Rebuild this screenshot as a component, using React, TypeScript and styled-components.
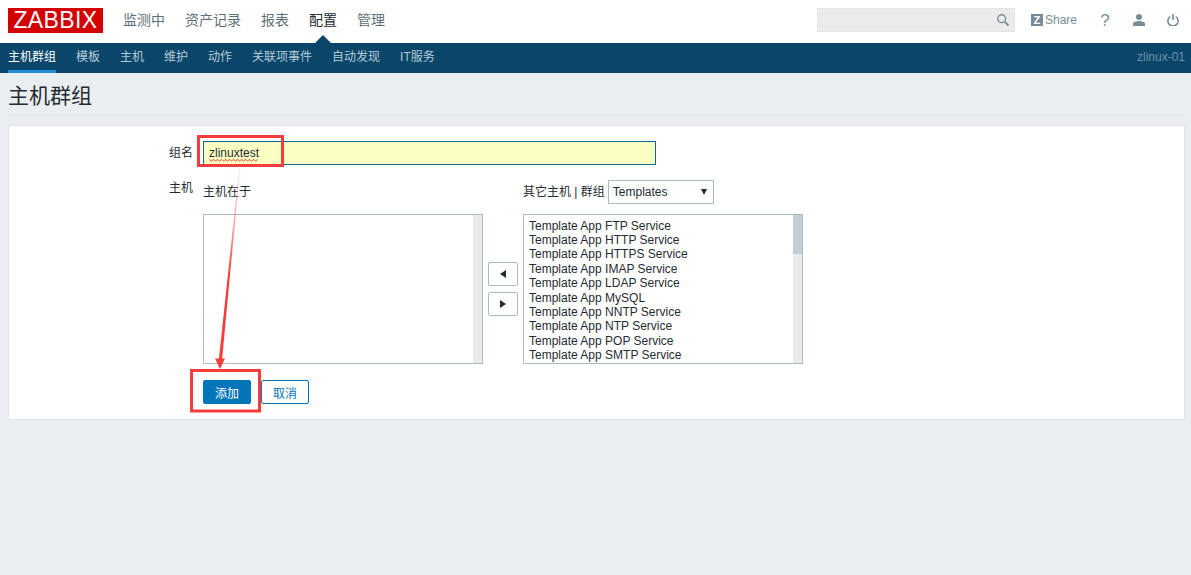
import styled, { createGlobalStyle } from 'styled-components';

const MAIN_MENU = ['监测中', '资产记录', '报表', '配置', '管理'];
const SUB_MENU = ['主机群组', '模板', '主机', '维护', '动作', '关联项事件', '自动发现', 'IT服务'];
const TEMPLATES = ['FTP', 'HTTP', 'HTTPS', 'IMAP', 'LDAP', 'MySQL', 'NNTP', 'NTP', 'POP', 'SMTP'];

const GlobalStyle = createGlobalStyle`
  html, body {
    margin: 0;
    padding: 0;
    background: #ebeef0;
    font-family: "Liberation Sans", "Noto Sans CJK SC", sans-serif;
    font-size: 12px;
    color: #1f2c33;
  }
`;

const App = () => {
  return (
    <Page>
      <GlobalStyle />
      <Header>
        <Logo>ZABBIX</Logo>
        <MainNav>
          {MAIN_MENU.map((item) => (
            <MainItem key={item} $active={item === '配置'}>
              {item}
            </MainItem>
          ))}
        </MainNav>
        <HeaderTools>
          <SearchBox>
            <svg width="12" height="12" viewBox="0 0 12 12" fill="none" stroke="#768d99" strokeWidth="1.4">
              <circle cx="4.7" cy="4.7" r="3.9" />
              <path d="M7.6 7.6 11.5 11.5" strokeWidth="1.9" />
            </svg>
          </SearchBox>
          <ShareLink>
            <ShareBadge>Z</ShareBadge>
            Share
          </ShareLink>
          <HelpIcon>?</HelpIcon>
          <ToolIcon>
            <svg width="12" height="12" viewBox="0 0 12 12" fill="#768d99">
              <circle cx="6" cy="3" r="3" />
              <path d="M0 12v-2.2C0 8 3 7 6 7s6 1 6 2.8V12z" />
            </svg>
          </ToolIcon>
          <ToolIcon>
            <svg width="12" height="12" viewBox="0 0 12 12" fill="none" stroke="#768d99" strokeWidth="1.6">
              <path d="M3.2 2.6a5.1 5.1 0 1 0 5.6 0" />
              <path d="M6 0v6" />
            </svg>
          </ToolIcon>
        </HeaderTools>
      </Header>
      <SubNav>
        {SUB_MENU.map((item, index) => (
          <SubItem key={item} $active={index === 0}>
            {item}
          </SubItem>
        ))}
        <ServerName>zlinux-01</ServerName>
      </SubNav>
      <Main>
        <TitleBar>主机群组</TitleBar>
        <Card>
          <FormRow>
            <FieldLabel>组名</FieldLabel>
            <NameInput readOnly value="zlinuxtest" spellCheck={false} />
          </FormRow>
          <FormRow>
            <HostLabel>主机</HostLabel>
            <Transfer>
              <ListCaption>主机在于</ListCaption>
              <span />
              <OtherCaption>
                其它主机 | 群组
                <SelectBox>
                  Templates
                  <svg width="6" height="6" viewBox="0 0 6 6" fill="#1f2c33">
                    <path d="M0 0h6L3 6z" />
                  </svg>
                </SelectBox>
              </OtherCaption>
              <HostList>
                <ScrollTrack />
              </HostList>
              <MoveButtons>
                <MoveButton>
                  <svg width="6" height="8" viewBox="0 0 6 8" fill="#1f2c33">
                    <path d="M6 0v8L0 4z" />
                  </svg>
                </MoveButton>
                <MoveButton>
                  <svg width="6" height="8" viewBox="0 0 6 8" fill="#1f2c33">
                    <path d="M0 0v8l6-4z" />
                  </svg>
                </MoveButton>
              </MoveButtons>
              <HostList>
                {TEMPLATES.map((name) => (
                  <HostOption key={name}>
                    Template App {name}
                    {name === 'MySQL' ? '' : ' Service'}
                  </HostOption>
                ))}
                <ScrollTrack>
                  <ScrollThumb />
                </ScrollTrack>
              </HostList>
            </Transfer>
          </FormRow>
          <FormRow>
            <span />
            <Actions>
              <PrimaryButton>添加</PrimaryButton>
              <OutlineButton>取消</OutlineButton>
            </Actions>
          </FormRow>
        </Card>
      </Main>
      <Annotations viewBox="0 0 1191 575" fill="none">
        <defs>
          <linearGradient id="arrowFade" x1="0" y1="165" x2="0" y2="368" gradientUnits="userSpaceOnUse">
            <stop offset="0" stopColor="#f43d3d" stopOpacity="0.1" />
            <stop offset="0.3" stopColor="#f43d3d" stopOpacity="0.5" />
            <stop offset="0.55" stopColor="#f43d3d" />
          </linearGradient>
        </defs>
        <path
          d="M209.5 159.5l2 1.5 2-1.5 2 1.5 2-1.5 2 1.5 2-1.5 2 1.5 2-1.5 2 1.5 2-1.5 2 1.5 2-1.5 2 1.5 2-1.5 2 1.5 2-1.5 2 1.5 2-1.5 2 1.5 2-1.5 2 1.5 2-1.5 2 1.5 2-1.5"
          stroke="#e8383d"
        />
        <rect x="198.5" y="136.5" width="84" height="29" stroke="#f43d3d" strokeWidth="3" />
        <rect x="191.5" y="370.5" width="68" height="40.5" stroke="#f43d3d" strokeWidth="3" />
        <path d="M239.6 165h.8L222 360h-3.2z" fill="url(#arrowFade)" />
        <path d="M215 358.5h10L220 369z" fill="#f43d3d" />
      </Annotations>
    </Page>
  );
};

const Page = styled.div`
  position: relative;
  min-height: 575px;
  overflow: hidden;
`;

const Header = styled.header`
  display: flex;
  align-items: flex-start;
  box-sizing: border-box;
  height: 43px;
  padding: 8px 12px 0 8px;
  background: #fff;
`;

const Logo = styled.div`
  width: 95px;
  height: 25px;
  background: #d40000;
  color: #fff;
  font-size: 23px;
  line-height: 25px;
  letter-spacing: 0.4px;
  text-align: center;
`;

const MainNav = styled.nav`
  display: flex;
  gap: 20px;
  margin-left: 20px;
`;

const MainItem = styled.a<{ $active?: boolean }>`
  position: relative;
  height: 35px;
  font-size: 14px;
  line-height: 24px;
  color: ${({ $active }) => ($active ? '#1f2c33' : '#5d6f79')};
  ${({ $active }) =>
    $active &&
    `
    &::after {
      content: '';
      position: absolute;
      left: 50%;
      bottom: 0;
      margin-left: -8px;
      border: 8px solid transparent;
      border-top: 0;
      border-bottom-color: #0a466a;
    }
  `}
`;

const HeaderTools = styled.div`
  display: flex;
  align-items: center;
  gap: 22px;
  height: 24px;
  margin-left: auto;
`;

const SearchBox = styled.div`
  display: flex;
  align-items: center;
  justify-content: flex-end;
  box-sizing: border-box;
  width: 198px;
  height: 24px;
  margin-right: -6px;
  padding-right: 5px;
  background: #ebebeb;
  border: 1px solid #e4e4e4;
`;

const ShareLink = styled.a`
  display: flex;
  align-items: center;
  gap: 2px;
  color: #768d99;
  font-size: 12px;
`;

const ShareBadge = styled.span`
  width: 12px;
  height: 12px;
  background: #768d99;
  color: #fff;
  font-size: 11px;
  font-weight: bold;
  line-height: 12px;
  text-align: center;
`;

const HelpIcon = styled.span`
  width: 12px;
  padding-top: 2px;
  color: #768d99;
  font-size: 17px;
  text-align: center;
`;

const ToolIcon = styled.span`
  display: flex;
`;

const SubNav = styled.nav`
  display: flex;
  gap: 20px;
  height: 30px;
  padding: 0 6px 0 8px;
  background: #0a466a;
`;

const SubItem = styled.a<{ $active?: boolean }>`
  box-sizing: border-box;
  height: 30px;
  font-size: 12px;
  line-height: 29px;
  color: ${({ $active }) => ($active ? '#fff' : '#b5cbd8')};
  border-bottom: 3px solid ${({ $active }) => ($active ? '#1f8dd6' : 'transparent')};
`;

const ServerName = styled.span`
  margin-left: auto;
  color: #6e93a8;
  font-size: 12px;
  line-height: 29px;
`;

const Main = styled.main`
  padding: 0 6px 0 8px;
`;

const TitleBar = styled.h1`
  margin: 0 0 10px;
  height: 41px;
  border-bottom: 1px solid #dfe4e7;
  font-size: 21px;
  font-weight: normal;
  line-height: 45px;
  color: #1f2c33;
`;

const Card = styled.section`
  display: flex;
  flex-direction: column;
  gap: 15px;
  padding: 15px 0;
  background: #fff;
  border: 1px solid #dfe4e7;
`;

const FormRow = styled.div`
  display: grid;
  grid-template-columns: 184px 1fr;
  column-gap: 10px;
  align-items: start;
`;

const FieldLabel = styled.label`
  line-height: 24px;
  text-align: right;
  color: #1f2c33;
`;

const HostLabel = styled(FieldLabel)`
  line-height: 16px;
`;

const NameInput = styled.input`
  box-sizing: border-box;
  width: 453px;
  height: 24px;
  padding: 0 5px;
  background: #fbffc2;
  border: 1px solid #0a6a9e;
  outline: none;
  font: 12px "Liberation Sans", sans-serif;
  color: #1f2c33;
`;

const Transfer = styled.div`
  display: grid;
  grid-template-columns: 280px 40px 280px;
  grid-template-rows: 24px 150px;
  row-gap: 10px;
`;

const ListCaption = styled.div`
  line-height: 25px;
`;

const OtherCaption = styled.div`
  display: flex;
  align-items: center;
  gap: 3px;
  line-height: 22px;
`;

const SelectBox = styled.div`
  display: flex;
  align-items: center;
  justify-content: space-between;
  box-sizing: border-box;
  width: 106px;
  height: 24px;
  padding: 0 6px 0 4px;
  background: #fff;
  border: 1px solid #acbbc2;
`;

const HostList = styled.div`
  position: relative;
  box-sizing: border-box;
  height: 150px;
  padding: 3.5px 5px 0;
  overflow: hidden;
  background: #fff;
  border: 1px solid #acbbc2;
`;

const ScrollTrack = styled.div`
  position: absolute;
  top: 0;
  right: 0;
  bottom: 0;
  width: 9px;
  background: #ebebeb;
`;

const ScrollThumb = styled.div`
  height: 39px;
  background: #c3ced6;
`;

const HostOption = styled.div`
  line-height: 14.4px;
  white-space: nowrap;
`;

const MoveButtons = styled.div`
  display: flex;
  flex-direction: column;
  align-items: center;
  justify-content: center;
  gap: 6px;
`;

const MoveButton = styled.button`
  display: flex;
  align-items: center;
  justify-content: center;
  width: 30px;
  height: 24px;
  padding: 0;
  background: #fff;
  border: 1px solid #acbbc2;
  border-radius: 2px;
`;

const Actions = styled.div`
  display: flex;
  gap: 10px;
  margin-top: 1px;
`;

const PrimaryButton = styled.button`
  box-sizing: border-box;
  width: 48px;
  height: 24px;
  padding: 0;
  background: #0275b8;
  border: 1px solid #0275b8;
  border-radius: 2px;
  color: #fff;
  font: 12px "Liberation Sans", "Noto Sans CJK SC", sans-serif;
`;

const OutlineButton = styled(PrimaryButton)`
  background: #fff;
  color: #0275b8;
`;

const Annotations = styled.svg`
  position: absolute;
  top: 0;
  left: 0;
  width: 1191px;
  height: 575px;
  pointer-events: none;
`;

export default App;
